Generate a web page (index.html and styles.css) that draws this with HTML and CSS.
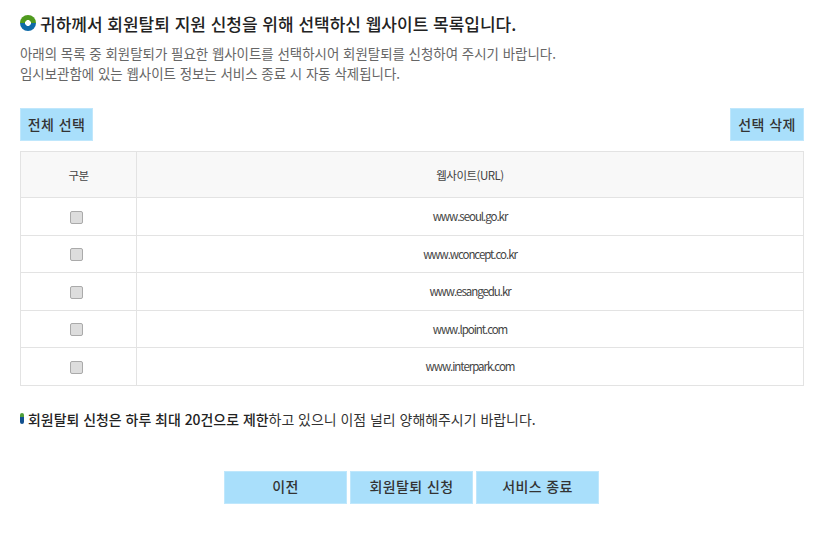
FILE: index.html
```html
<!DOCTYPE html>
<html lang="ko">
<head>
    <meta charset="UTF-8">
    <title>회원탈퇴 지원 신청</title>
    <link rel="stylesheet" href="styles.css">
</head>
<body>

<div class="container">
    <h2 class="title">
        <span class="title-icon"></span>
        귀하께서 회원탈퇴 지원 신청을 위해 선택하신 웹사이트 목록입니다.
    </h2>
    <p class="intro">아래의 목록 중 회원탈퇴가 필요한 웹사이트를 선택하시어 회원탈퇴를 신청하여 주시기 바랍니다.<br>임시보관함에 있는 웹사이트 정보는 서비스 종료 시 자동 삭제됩니다.</p>

    <div class="toolbar">
        <button class="btn btn-left">전체 선택</button>
        <button class="btn">선택 삭제</button>
    </div>

    <table class="site-table">
        <thead>
            <tr>
                <th class="col-check">구분</th>
                <th>웹사이트(URL)</th>
            </tr>
        </thead>
        <tbody>
            <tr><td><span class="check"></span></td><td>www.seoul.go.kr</td></tr>
            <tr><td><span class="check"></span></td><td>www.wconcept.co.kr</td></tr>
            <tr><td><span class="check"></span></td><td>www.esangedu.kr</td></tr>
            <tr><td><span class="check"></span></td><td>www.lpoint.com</td></tr>
            <tr><td><span class="check"></span></td><td>www.interpark.com</td></tr>
        </tbody>
    </table>

    <p class="notice">
        <span class="notice-icon"></span>
        <span><b>회원탈퇴 신청은 하루 최대 20건으로 제한</b>하고 있으니 이점 널리 양해해주시기 바랍니다.</span>
    </p>

    <div class="actions">
        <button class="btn btn-wide">이전</button>
        <button class="btn btn-wide">회원탈퇴 신청</button>
        <button class="btn btn-wide">서비스 종료</button>
    </div>
</div>

</body>
</html>
```

FILE: styles.css
```css
body {
    margin: 0;
    background-color: #fff;
    font-family: "Noto Sans CJK KR", "Noto Sans", sans-serif;
    color: #333;
}

.container {
    width: 784px;
    padding: 12px 14px 0 20px;
}

/* Heading with round icon */
.title {
    display: flex;
    align-items: center;
    gap: 4px;
    margin: 0;
    height: 22px;
    font-size: 17px;
    font-weight: 500;
    color: #222;
}

.title-icon {
    flex-shrink: 0;
    width: 16px;
    height: 16px;
    border-radius: 50%;
    background: radial-gradient(circle, #fff 2.6px, transparent 3.2px), linear-gradient(#4f9a1e 50%, #0f6ba8 50%);
}

.intro {
    margin: 9px 0 0;
    font-size: 13.45px;
    line-height: 20px;
    color: #666;
}

.toolbar {
    display: flex;
    justify-content: space-between;
    margin-top: 25px;
}

.btn {
    width: 74px;
    height: 33px;
    padding: 0 0 2px;
    background-color: #a9dffb;
    border: 1px solid #bfe7fc;
    font-family: inherit;
    font-size: 14px;
    font-weight: 500;
    letter-spacing: 0.4px;
    color: #333;
}

.btn-left {
    width: 73px;
}

/* URL table */
.site-table {
    width: 100%;
    margin-top: 10px;
    border-collapse: collapse;
    font-size: 11.5px;
    letter-spacing: -1.05px;
    text-align: center;
    color: #444;
}

.site-table th,
.site-table td {
    border: 1px solid #e3e3e3;
    padding: 0;
}

.site-table th {
    height: 45px;
    background-color: #f8f8f8;
    font-weight: 400;
    letter-spacing: -0.5px;
}

.site-table td {
    height: 36.5px;
}

.col-check {
    width: 115px;
}

.check {
    display: block;
    width: 11px;
    height: 11px;
    margin: 2px 0 0 49px;
    background-color: #ddd;
    border: 1px solid #aaa;
    border-radius: 2px;
}

/* Limit notice */
.notice {
    display: flex;
    align-items: center;
    gap: 4px;
    margin: 23px 0 0;
    font-size: 13.94px;
    line-height: 20px;
}

.notice b {
    font-weight: 500;
    color: #222;
}

.notice-icon {
    width: 4px;
    height: 11px;
    border-radius: 2px;
    background: linear-gradient(#4f9e3a 40%, #12508f 40%);
}

.actions {
    display: flex;
    justify-content: center;
    gap: 3px;
    margin-top: 42px;
    padding-right: 1px;
}

.btn-wide {
    width: 123px;
}
```
